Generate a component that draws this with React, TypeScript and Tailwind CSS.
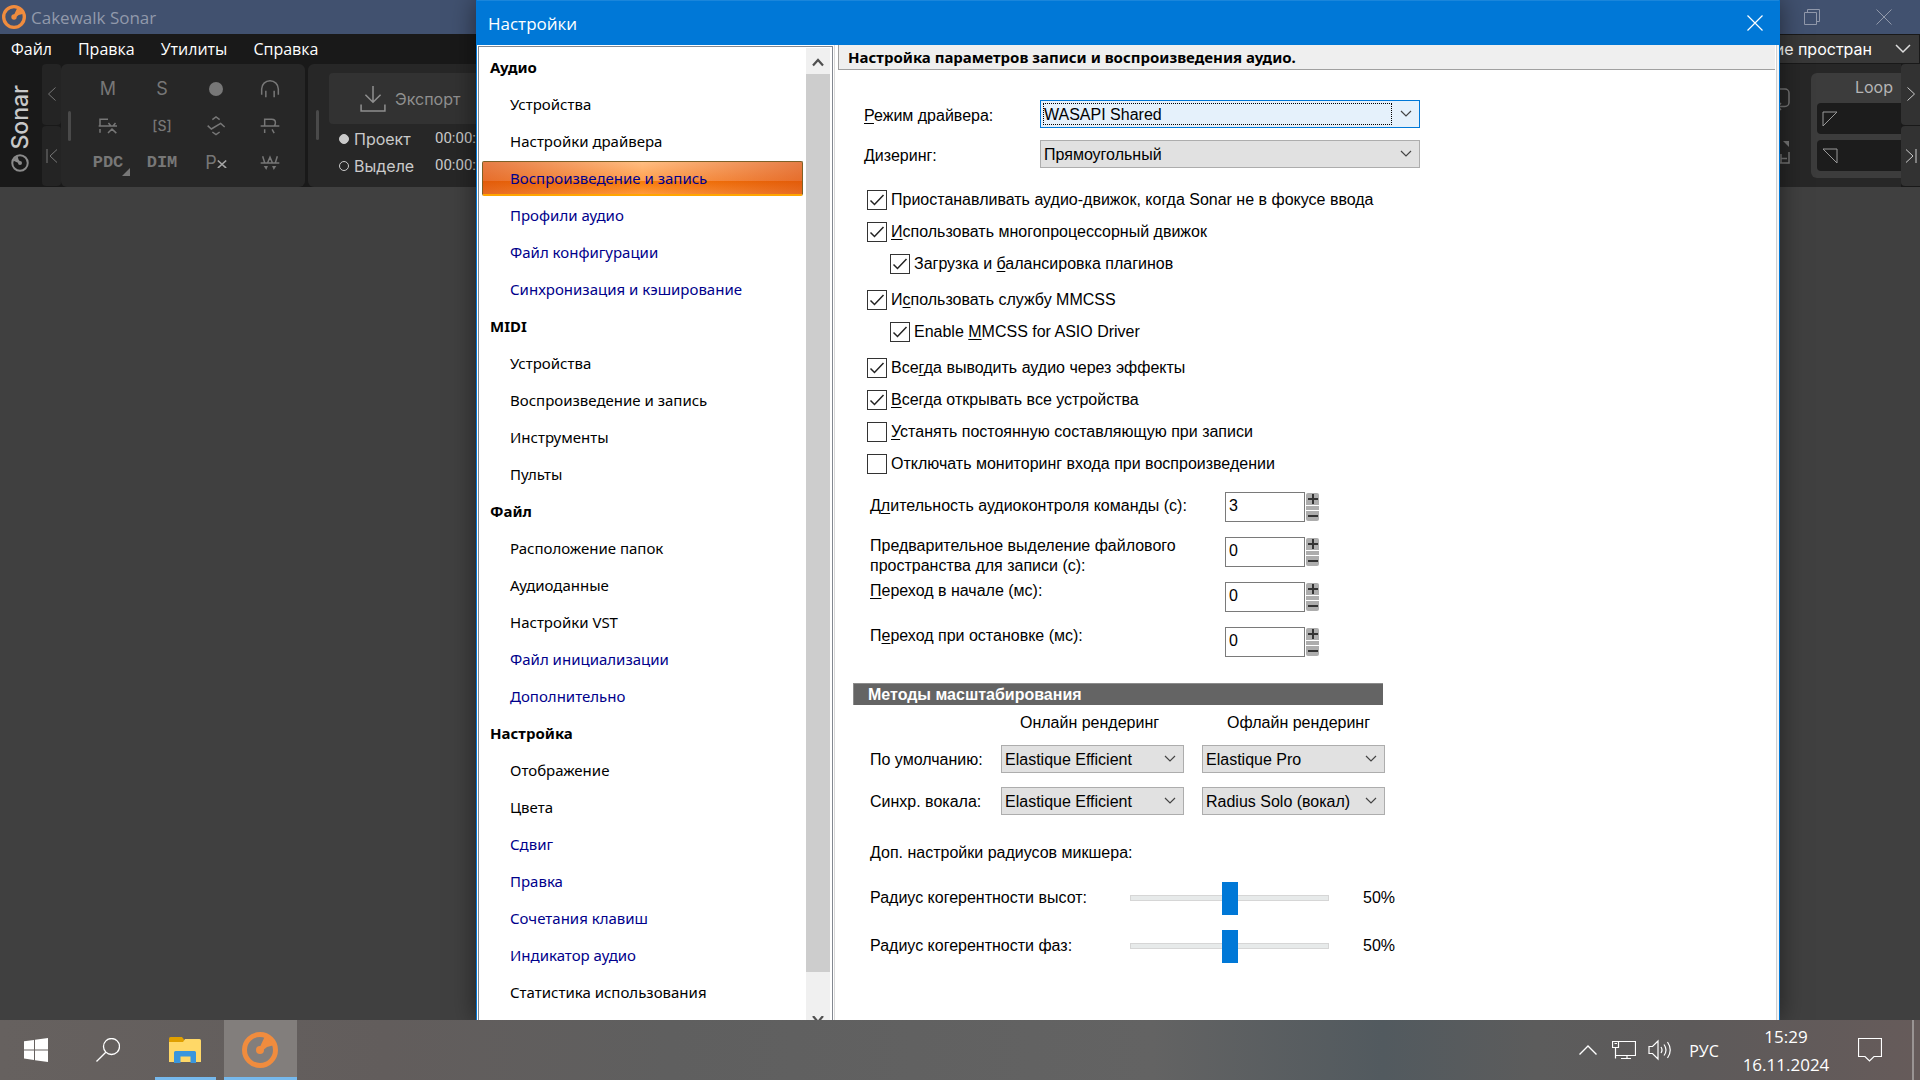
import { ReactNode, useState } from 'react';
import clsx from 'clsx';

type NavItem = {
  text: string;
  kind: 'head' | 'dark' | 'blue';
  selected?: boolean;
};

const NAV: NavItem[] = [
  { text: 'Аудио', kind: 'head' },
  { text: 'Устройства', kind: 'dark' },
  { text: 'Настройки драйвера', kind: 'dark' },
  { text: 'Воспроизведение и запись', kind: 'blue', selected: true },
  { text: 'Профили аудио', kind: 'blue' },
  { text: 'Файл конфигурации', kind: 'blue' },
  { text: 'Синхронизация и кэширование', kind: 'blue' },
  { text: 'MIDI', kind: 'head' },
  { text: 'Устройства', kind: 'dark' },
  { text: 'Воспроизведение и запись', kind: 'dark' },
  { text: 'Инструменты', kind: 'dark' },
  { text: 'Пульты', kind: 'dark' },
  { text: 'Файл', kind: 'head' },
  { text: 'Расположение папок', kind: 'dark' },
  { text: 'Аудиоданные', kind: 'dark' },
  { text: 'Настройки VST', kind: 'dark' },
  { text: 'Файл инициализации', kind: 'blue' },
  { text: 'Дополнительно', kind: 'blue' },
  { text: 'Настройка', kind: 'head' },
  { text: 'Отображение', kind: 'dark' },
  { text: 'Цвета', kind: 'dark' },
  { text: 'Сдвиг', kind: 'blue' },
  { text: 'Правка', kind: 'blue' },
  { text: 'Сочетания клавиш', kind: 'blue' },
  { text: 'Индикатор аудио', kind: 'blue' },
  { text: 'Статистика использования', kind: 'dark' },
];

// "&" marks the access key, as in a Windows resource string
const CHECK_GROUPS = [
  [
    { text: 'Приостанавливать аудио-движок, когда Sonar не в фокусе ввода', on: true },
    { text: '&Использовать многопроцессорный движок', on: true },
    { text: 'Загрузка и &балансировка плагинов', on: true, sub: true },
  ],
  [
    { text: 'И&спользовать службу MMCSS', on: true },
    { text: 'Enable &MMCSS for ASIO Driver', on: true, sub: true },
  ],
  [
    { text: 'Все&гда выводить аудио через эффекты', on: true },
    { text: '&Всегда открывать все устройства', on: true },
    { text: '&Устанять постоянную составляющую при записи', on: false },
    { text: 'Отключать мониторинг входа при воспроизведении', on: false },
  ],
];

const NUMBERS = [
  { text: 'Д&лительность аудиоконтроля команды (с):', value: '3' },
  { text: 'Предварительное выделение файлового пространства для записи (с):', value: '0' },
  { text: '&Переход в начале (мс):', value: '0' },
  { text: 'П&ереход при остановке (мс):', value: '0' },
];

const Mnemonic = ({ text }: { text: string }) => {
  const at = text.indexOf('&');
  if (at < 0) return <>{text}</>;
  return (
    <>
      {text.slice(0, at)}
      <span className="underline underline-offset-2">{text[at + 1]}</span>
      {text.slice(at + 2)}
    </>
  );
};

const SonarLogo = ({ className, ring = 5 }: { className: string; ring?: number }) => (
  <svg viewBox="0 0 36 36" className={className} fill="none">
    <circle cx="18" cy="18" r="15.5" stroke="currentColor" strokeWidth={ring} />
    <path d="M17 17 23 4 32.500 13 25 15 20 19Z" fill="currentColor" />
    <circle cx="18" cy="18" r="4" fill="currentColor" />
  </svg>
);

const Icon = ({ children, size = 'size-6', width = 1.5 }: { children: ReactNode; size?: string; width?: number }) => (
  <svg viewBox="0 0 24 24" className={clsx('shrink-0', size)} fill="none" stroke="currentColor" strokeWidth={width}>
    {children}
  </svg>
);

const Combo = ({
  id,
  label,
  value,
  focused,
  width,
}: {
  id: string;
  label?: string;
  value: string;
  focused?: boolean;
  width: string;
}) => (
  <div className={clsx('relative shrink-0', width)}>
    <select
      id={id}
      aria-label={label}
      className={clsx(
        'block h-7 w-full appearance-none border pt-0.5 pl-[3px] outline-none',
        focused ? 'border-[#0078d7] bg-[#e5f1fb]' : 'border-[#adadad] bg-[#e1e1e1]',
      )}
    >
      <option>{value}</option>
    </select>
    {focused && <span className="pointer-events-none absolute inset-y-[3px] left-[3px] right-7 border border-dotted border-black" />}
    <svg viewBox="0 0 12 8" className="pointer-events-none absolute right-2 top-[10px] h-2 w-3" fill="none" stroke="#444">
      <path d="M1 1l5 5 5-5" strokeWidth="1.2" />
    </svg>
  </div>
);

const Check = ({ text, on, sub }: { text: string; on: boolean; sub?: boolean }) => {
  const [checked, setChecked] = useState(on);

  return (
    <label className={clsx('flex h-8 items-center gap-1', sub && 'pl-[23px]')}>
      <span className="relative size-5 shrink-0">
        <input
          type="checkbox"
          className="block size-5 appearance-none border border-[#333] bg-white"
          checked={checked}
          onChange={() => setChecked(!checked)}
        />
        {checked && (
          <svg viewBox="0 0 20 20" className="pointer-events-none absolute inset-0 size-5" fill="none" stroke="#222">
            <path d="M3.5 10.5l4 4 9-9.5" strokeWidth="1.5" />
          </svg>
        )}
      </span>
      <span>
        <Mnemonic text={text} />
      </span>
    </label>
  );
};

const NumberRow = ({ index, text, value }: { index: number; text: string; value: string }) => {
  const [val, setVal] = useState(value);
  const step = (by: number) => setVal(String(Math.max(0, Number(val) + by)));

  return (
    <div className="flex h-[45px] items-start">
      <label htmlFor={`num-${index}`} className={clsx('w-[355px] pr-4', index === 0 ? 'pt-[6px]' : 'pt-px')}>
        <Mnemonic text={text} />
      </label>
      <div className="flex gap-px pt-0.5">
        <input
          id={`num-${index}`}
          type="text"
          className="h-[30px] w-20 border border-[#7a7a7a] pb-0.5 pl-[3px] outline-none"
          value={val}
          onChange={(e) => setVal(e.target.value)}
        />
        <div className="flex h-[30px] w-[13px] flex-col gap-px py-px">
          <button
            type="button"
            aria-label="+"
            className="flex h-3 items-center justify-center rounded-t-xs bg-[#adadad]"
            onClick={() => step(1)}
          >
            <svg viewBox="0 0 10 10" className="size-[10px]" stroke="#333" strokeWidth="2">
              <path d="M0 5h10M5 0v10" />
            </svg>
          </button>
          <span className="h-1 bg-[#adadad]" />
          <button
            type="button"
            aria-label="−"
            className="flex h-[10px] items-center justify-center rounded-b-xs bg-[#adadad]"
            onClick={() => step(-1)}
          >
            <svg viewBox="0 0 10 10" className="size-[10px]" stroke="#333" strokeWidth="2">
              <path d="M0 5h10" />
            </svg>
          </button>
        </div>
      </div>
    </div>
  );
};

const Slider = ({ id, label }: { id: string; label: string }) => {
  const [value, setValue] = useState(50);

  return (
    <div className="flex h-12 items-center">
      <label htmlFor={id} className="w-[260px]">
        {label}
      </label>
      <input
        id={id}
        type="range"
        className="h-[33px] w-[199px] appearance-none bg-transparent [&::-webkit-slider-runnable-track]:h-[6px] [&::-webkit-slider-runnable-track]:border [&::-webkit-slider-runnable-track]:border-[#d6d6d6] [&::-webkit-slider-runnable-track]:bg-[#e7eaea] [&::-webkit-slider-thumb]:-mt-[14px] [&::-webkit-slider-thumb]:h-[33px] [&::-webkit-slider-thumb]:w-4 [&::-webkit-slider-thumb]:appearance-none [&::-webkit-slider-thumb]:bg-[#0078d7]"
        value={value}
        onChange={(e) => setValue(Number(e.target.value))}
      />
      <span className="pl-[34px]">{value}%</span>
    </div>
  );
};

const ToolButton = ({ children }: { children: ReactNode }) => (
  <button type="button" className="relative flex h-[37px] w-[54px] items-center justify-center">
    {children}
  </button>
);

const Toolbar = () => (
  <div className="flex h-[123px] bg-[#191919] font-['Inter','Liberation_Sans',sans-serif]">
    <div className="flex w-[42px] flex-col items-center justify-end gap-1 pr-[3px] pb-[15px]">
      <span className="rotate-180 text-[23px] leading-6 font-medium text-[#c8c8c8] [writing-mode:vertical-rl]">Sonar</span>
      <SonarLogo className="size-[18px] -rotate-90 text-[#8a8a8a]" ring={4} />
    </div>
    <div className="flex w-[19px] flex-col gap-px pb-px text-[#777]">
      <button type="button" aria-label="<" className="flex flex-1 items-center justify-center rounded-sm bg-[#242424]">
        <svg viewBox="0 0 10 14" className="h-[14px] w-[10px]" fill="none" stroke="currentColor">
          <path d="M8.500 .5l-7 6.500 7 6.500" />
        </svg>
      </button>
      <button type="button" aria-label="|<" className="flex flex-1 items-center justify-center rounded-sm bg-[#242424]">
        <svg viewBox="0 0 12 14" className="h-[14px] w-3" fill="none" stroke="currentColor">
          <path d="M1 0v14M11 .5L4 7l7 6.500" />
        </svg>
      </button>
    </div>
    <div className="flex w-[244px] items-center rounded-md bg-[#272727] text-[#777]">
      <span className="ml-[7px] h-[30px] w-[3px] rounded-full bg-[#4a4a4a]" />
      <div className="ml-[10px] grid grid-cols-4">
        <ToolButton>
          <span className="text-lg">M</span>
        </ToolButton>
        <ToolButton>
          <span className="text-lg">S</span>
        </ToolButton>
        <ToolButton>
          <span className="size-[14px] rounded-full bg-[#777]" />
        </ToolButton>
        <ToolButton>
          <Icon size="size-5" width={1.8}>
            <path d="M2 19v-7a10 10 0 0 1 20 0v7M7 14v8M17 14v8" />
          </Icon>
        </ToolButton>
        <ToolButton>
          <Icon size="size-5" width={1.8}>
            <path d="M2.400 12V4H12M.8 12h22M2.400 15.600V20M12 20.500l4.800-4.800 5.200 4.800M12.500 8.500l2.500 3M21 8.500l-2.500 3" />
          </Icon>
        </ToolButton>
        <ToolButton>
          <span className="text-sm font-medium">[S]</span>
        </ToolButton>
        <ToolButton>
          <Icon size="size-5" width={1.8}>
            <path d="M7.600 4.400L12 1.200l4.400 3.200M2 11.600l4.400 4 11.200-6.800 4.800 4.400M7.600 19.200l4.400 3.200 4.400-3.200" />
          </Icon>
        </ToolButton>
        <ToolButton>
          <Icon size="size-5" width={1.8}>
            <path d="M5.600 12V4H14q4.500 0 4.500 4 0 2.500-1.500 4M.8 12h22.400M5.600 16v4.500M14.500 16l2.500 4.500" />
          </Icon>
        </ToolButton>
        <ToolButton>
          <span className="font-['Liberation_Mono',monospace] text-[17px] font-bold">PDC</span>
          <svg viewBox="0 0 8 8" className="absolute right-[5px] bottom-[5px] size-2" fill="#777">
            <path d="M8 0v8H0z" />
          </svg>
        </ToolButton>
        <ToolButton>
          <span className="font-['Liberation_Mono',monospace] text-[17px] font-bold">DIM</span>
        </ToolButton>
        <ToolButton>
          <span className="text-lg">P</span>
          <Icon size="size-[10px]" width={4}>
            <path d="M2 6l20 18M22 6L2 24" stroke="#a5a5a5" />
          </Icon>
        </ToolButton>
        <ToolButton>
          <Icon size="size-5" width={1.8}>
            <path d="M3.200 4l2.500 8M9 12l3-7 3 7M20.800 4l-2.500 8M.8 12h22.400" />
            <path d="M4.500 15.500h5l-2 5zM14.500 15.500h5l-3 5z" fill="currentColor" stroke="none" />
          </Icon>
        </ToolButton>
      </div>
    </div>
    <div className="ml-[3px] flex flex-1 rounded-l-md bg-[#272727]">
      <span className="mt-[46px] ml-2 h-[30px] w-[3px] rounded-full bg-[#4a4a4a]" />
      <div className="ml-[10px] flex w-[190px] flex-col pt-[9px]">
        <button type="button" className="flex h-[51px] items-center gap-[9px] rounded-sm bg-[#323232] pl-[31px] text-base text-[#8f8f8f]">
          <Icon size="size-[26px]" width={1.4}>
            <path d="M12 0v14M5 8l7 7 7-7M1 17v6h22v-6" />
          </Icon>
          Экспорт
        </button>
        <div className="flex flex-col pt-px pl-[10px] text-base text-[#cacaca]">
          {['Проект', 'Выделе'].map((name, i) => (
            <div key={name} className="flex h-[27px] items-center">
              <label className="flex w-24 items-center gap-[5px]">
                <input
                  type="radio"
                  name="export-range"
                  defaultChecked={i === 0}
                  className="size-[10px] appearance-none rounded-full border border-[#cacaca] checked:bg-[#cacaca]"
                />
                {name}
              </label>
              <span className="font-['Roboto',sans-serif] text-[15px]">00:00:00</span>
            </div>
          ))}
        </div>
      </div>
      <div className="ml-auto flex text-[#777]">
        <div className="flex w-8 flex-col items-end gap-[29px] pt-[23px] pr-[5px]">
          <Icon>
            <path d="M15 23l-3-3.500 3-3.500M13 19.500h6a4 4 0 0 0 4-4V6a4 4 0 0 0-4-4H4" />
          </Icon>
          <Icon>
            <path d="M0 23h23V12M15 14v9M15 18.500h6" />
            <path d="M23 1v6l-6-6z" fill="currentColor" stroke="none" />
          </Icon>
        </div>
        <div className="mt-[9px] ml-4 flex h-[105px] w-[90px] flex-col gap-[6px] rounded-l-md bg-[#3c3c3c] pl-[6px]">
          <span className="h-6 pt-0.5 pr-2 text-right text-base text-[#b5b5b5]">Loop</span>
          <span className="flex h-[31px] items-center rounded-l-sm bg-[#1c1c1c] pl-[5px]">
            <svg viewBox="0 0 16 16" className="size-4" fill="none" stroke="#999">
              <path d="M1 1h14L1 15z" />
            </svg>
          </span>
          <span className="flex h-[31px] items-center rounded-l-sm bg-[#1c1c1c] pl-[5px]">
            <svg viewBox="0 0 16 16" className="size-4" fill="none" stroke="#999">
              <path d="M1 1h14v14z" />
            </svg>
          </span>
        </div>
      </div>
    </div>
    <div className="flex w-[19px] flex-col gap-px pb-px text-[#ccc]">
      <button type="button" aria-label=">" className="flex flex-1 items-center justify-center rounded-l-sm bg-[#323232]">
        <svg viewBox="0 0 10 14" className="h-[14px] w-[10px]" fill="none" stroke="currentColor">
          <path d="M1.500 .5l7 6.500-7 6.500" />
        </svg>
      </button>
      <button type="button" aria-label=">|" className="flex flex-1 items-center justify-center rounded-l-sm bg-[#323232]">
        <svg viewBox="0 0 12 14" className="h-[14px] w-3" fill="none" stroke="currentColor">
          <path d="M11 0v14M1 .5L8 7l-7 6.500" />
        </svg>
      </button>
    </div>
  </div>
);

const SonarWindow = () => (
  <div className="flex h-full flex-col bg-[#404040]">
    <header className="flex h-[34px] items-center bg-[#41516f] pl-[2px] text-[#9199ab]">
      <SonarLogo className="size-6 text-[#f08c3e]" />
      <span className="pt-px pl-[5px] text-[17px]">Cakewalk Sonar</span>
      <button type="button" aria-label="Restore" className="ml-auto flex h-full w-[72px] items-center justify-center">
        <svg viewBox="0 0 16 16" className="size-4" fill="none" stroke="currentColor">
          <path d="M.5 3.500h12v12H.5zM3.500 3V.5h12v12H13" />
        </svg>
      </button>
      <button type="button" aria-label="Close" className="flex h-full w-[72px] items-center justify-center">
        <svg viewBox="0 0 16 16" className="size-4" fill="none" stroke="currentColor">
          <path d="M.5.5l15 15M15.500.5l-15 15" />
        </svg>
      </button>
    </header>
    <nav className="flex h-[30px] items-center gap-[26px] bg-[#191919] pl-[11px] text-base text-white">
      <button type="button">Файл</button>
      <button type="button">Правка</button>
      <button type="button">Утилиты</button>
      <button type="button">Справка</button>
      <div className="relative mr-px ml-auto h-7 w-[170px] bg-[#383838]">
        <select
          aria-label="Workspace"
          className="h-full w-full appearance-none bg-transparent pr-[47px] font-['Inter',sans-serif] text-base [text-align-last:right]"
        >
          <option>ие простран</option>
        </select>
        <svg viewBox="0 0 16 10" className="pointer-events-none absolute top-[9px] right-2 h-[10px] w-4" fill="none" stroke="#ddd">
          <path d="M1 1l7 7 7-7" strokeWidth="1.5" />
        </svg>
      </div>
    </nav>
    <Toolbar />
  </div>
);

const Sidebar = () => (
  <div className="mt-px ml-px flex w-[355px] shrink-0 overflow-hidden border border-b-0 border-[#828790] pt-px">
    <ul className="min-w-0 flex-1 pt-px pr-[3px] pl-[3px] font-['Noto_Sans','Open_Sans',sans-serif] text-[15px]">
      {NAV.map((item, i) => (
        <li key={i} className="flex h-[37px] items-center">
          {item.kind === 'head' ? (
            <h2 className="pl-2 font-bold text-black">{item.text}</h2>
          ) : (
            <a
              href="#"
              className={clsx(
                'flex h-[35px] w-full items-center',
                item.kind === 'dark' ? 'text-black' : 'text-[#00008b]',
                item.selected
                  ? 'rounded-xs border border-b-2 border-[#7d6128] border-b-[#ffa500] bg-[linear-gradient(90deg,rgba(206,60,10,.5),transparent_50%,rgba(206,60,10,.5)),linear-gradient(#ffbe82,#ffa04d_58%,#f77a08_60%,#ff9a3c)] pl-[27px] text-[#1c1450]'
                  : 'pl-7',
              )}
            >
              {item.text}
            </a>
          )}
        </li>
      ))}
    </ul>
    <div className="mr-0.5 flex w-6 flex-col bg-[#f0f0f0]">
      <button type="button" aria-label="Up" className="flex h-[26px] shrink-0 items-center justify-center pt-0.5">
        <svg viewBox="0 0 12 9" className="h-[9px] w-3" fill="none" stroke="#505050" strokeWidth="2.2">
          <path d="M1 7.500l5-5.500 5 5.500" />
        </svg>
      </button>
      <span className="flex-1 bg-[#cdcdcd]" />
      <button type="button" aria-label="Down" className="flex h-12 shrink-0 items-end justify-center overflow-hidden">
        <svg viewBox="0 0 12 4" className="h-1 w-3" fill="none" stroke="#505050" strokeWidth="2.2">
          <path d="M1 0l5 6 5-6" />
        </svg>
      </button>
    </div>
  </div>
);

const SettingsDialog = () => (
  <section className="absolute top-0 right-[140px] bottom-0 left-[476px] flex flex-col overflow-hidden border-x border-[#0078d7] bg-white text-black shadow-[0_0_24px_rgba(0,0,0,0.5)]">
    <header className="flex h-[45px] shrink-0 items-center justify-between border-t border-[#1a86db] bg-[#0078d7] pr-4 pl-[11px] text-white">
      <h1 className="pt-px text-[17px]">Настройки</h1>
      <button type="button" aria-label="Close">
        <svg viewBox="0 0 16 16" className="size-4" fill="none" stroke="currentColor" strokeWidth="1.2">
          <path d="M.5.5l15 15M15.500.5l-15 15" />
        </svg>
      </button>
    </header>
    <div className="flex min-h-0 flex-1">
      <Sidebar />
      <div className="ml-px w-px bg-[#d9d9d9]" />
      <main className="mr-px ml-[3px] min-w-0 flex-1 font-['Liberation_Sans',sans-serif] text-base leading-5">
        <h2 className="flex h-[25px] items-center border-b border-l border-[#a0a0a0] bg-[#efefef] pl-[9px] font-['Noto_Sans','Open_Sans',sans-serif] text-[15px] font-bold">
          Настройка параметров записи и воспроизведения аудио.
        </h2>
        <form className="pl-[15px]">
          <div className="flex flex-col gap-3 pt-[30px] pl-[11px]">
            <div className="flex items-center">
              <label htmlFor="driver" className="w-[176px] pt-1">
                <Mnemonic text="&Режим драйвера:" />
              </label>
              <Combo id="driver" value="WASAPI Shared" focused width="w-[380px]" />
            </div>
            <div className="flex items-center">
              <label htmlFor="dither" className="w-[176px] pt-1">
                <Mnemonic text="&Дизеринг:" />
              </label>
              <Combo id="dither" value="Прямоугольный" width="w-[380px]" />
            </div>
          </div>

          <div className="flex flex-col gap-1 pt-4 pl-[14px]">
            {CHECK_GROUPS.map((group, i) => (
              <div key={i}>
                {group.map((item) => (
                  <Check key={item.text} {...item} />
                ))}
              </div>
            ))}
          </div>

          <div className="pt-[10px] pl-[17px]">
            {NUMBERS.map((item, i) => (
              <NumberRow key={item.text} index={i} {...item} />
            ))}
          </div>

          <fieldset className="pt-[13px]">
            <h3 className="flex h-[22px] w-[530px] items-center border-t border-l border-[#8c8c8c] bg-[#646464] pl-[14px] font-bold text-white">
              Методы масштабирования
            </h3>
            <div className="flex pl-[141px]">
              <span className="h-10 w-[191px] pt-2 text-center">Онлайн рендеринг</span>
              <span className="h-10 w-[227px] pt-2 text-center">Офлайн рендеринг</span>
            </div>
            <div className="flex flex-col gap-[14px] pl-[17px]">
              {[
                ['По умолчанию:', 'Elastique Efficient', 'Elastique Pro'],
                ['Синхр. вокала:', 'Elastique Efficient', 'Radius Solo (вокал)'],
              ].map(([label, online, offline], i) => (
                <div key={label} className="flex items-center">
                  <label htmlFor={`online-${i}`} className="w-[131px] pt-0.5">
                    {label}
                  </label>
                  <Combo id={`online-${i}`} value={online} width="w-[183px]" />
                  <div className="w-[18px]" />
                  <Combo id={`offline-${i}`} label={label} value={offline} width="w-[183px]" />
                </div>
              ))}
            </div>
          </fieldset>

          <div className="pt-7 pl-[17px]">
            <p className="pb-[11px]">Доп. настройки радиусов микшера:</p>
            <Slider id="pitch" label="Радиус когерентности высот:" />
            <Slider id="phase" label="Радиус когерентности фаз:" />
          </div>
        </form>
      </main>
      <div className="w-[3px] border-l border-[#d0d0d0] bg-[#f4f4f4]" />
    </div>
  </section>
);

const Taskbar = () => (
  <footer className="relative flex h-[60px] shrink-0 bg-[linear-gradient(90deg,#66615f,#625d5c_20%,#5f5f5f_35%,#636363_60%,#525a5f_72%,#5c5c5c_80%,#5d5a5a_88%,#665b5a)] text-white">
    <button type="button" aria-label="Start" className="flex w-[72px] items-center justify-center">
      <svg viewBox="0 0 24 24" className="size-6" fill="currentColor">
        <path d="M0 3.300L10 2v9.400H0zM11 1.800L24 0v11.400H11zM0 12.500h10V22L0 20.600zM11 12.500h13V24l-13-1.800z" />
      </svg>
    </button>
    <button type="button" aria-label="Search" className="flex w-[72px] items-center justify-center">
      <Icon width={1.3}>
        <circle cx="15.500" cy="8.500" r="8" />
        <path d="M9.800 14.200L.5 23.500" />
      </Icon>
    </button>
    <button type="button" aria-label="Explorer" className="ml-[11px] flex w-[61px] items-center justify-center border-b-[3px] border-[#76b9ed] pt-[3px] pr-px">
      <svg viewBox="0 0 32 26" className="h-[26px] w-8">
        <path d="M0 1.500Q0 0 1.500 0H13l2 2.500V6H0z" fill="#e0a000" />
        <path d="M0 5h14l2-3h14.500Q32 2 32 3.500V25H0z" fill="#ffd867" />
        <path d="M5 26V15.500q0-1.500 1.500-1.500h19q1.500 0 1.500 1.500V26h-5.500v-6.500h-10V26z" fill="#3a96dd" />
      </svg>
    </button>
    <button type="button" aria-label="Sonar" className="ml-2 flex w-[73px] items-center justify-center border-b-[3px] border-[#76b9ed] bg-[#827e7c] pt-[3px] pr-px">
      <SonarLogo className="size-9 text-[#f08c3e]" />
    </button>

    <div className="ml-auto flex items-center">
      <button type="button" aria-label="Tray" className="flex w-[33px]">
        <svg viewBox="0 0 18 10" className="h-[10px] w-[18px]" fill="none" stroke="currentColor" strokeWidth="1.4">
          <path d="M.5 9.500L9 1l8.500 8.500" />
        </svg>
      </button>
      <Icon width={1.2}>
        <path d="M7 3.500h16.500v14H4M15 17.500v3M9 20.500h10M.5 3.500h6v6h-6zM3.500 9.500v11M2.500 5.500h2.500" />
      </Icon>
      <svg viewBox="0 0 24 24" className="ml-3 size-6" fill="none" stroke="currentColor" strokeWidth="1.2">
        <path d="M1 8.500h3.500L10 3v18l-5.500-5.500H1zM13 9q2 3 0 6M16 6.500q4 5.500 0 11M19.500 4q5.500 8 0 16" />
      </svg>
      <button type="button" className="ml-4 w-8 pt-px text-base">
        РУС
      </button>
      <div className="ml-[18px] flex w-[96px] flex-col pt-0.5 text-center text-[17px] leading-7">
        <span>15:29</span>
        <span>16.11.2024</span>
      </div>
      <button type="button" aria-label="Notifications" className="ml-6">
        <Icon width={1.2}>
          <path d="M.5.5h23v18H16l-4.500 4.500L7 18.500H.5z" />
        </Icon>
      </button>
      <span className="mr-[6px] ml-[30px] h-[60px] w-0.5 bg-[#9a9493]" />
    </div>
  </footer>
);

export default function App() {
  return (
    <div className="flex h-screen flex-col overflow-hidden font-['Open_Sans','Noto_Sans',sans-serif]">
      <div className="relative min-h-0 flex-1">
        <SonarWindow />
        <SettingsDialog />
      </div>
      <Taskbar />
    </div>
  );
}
